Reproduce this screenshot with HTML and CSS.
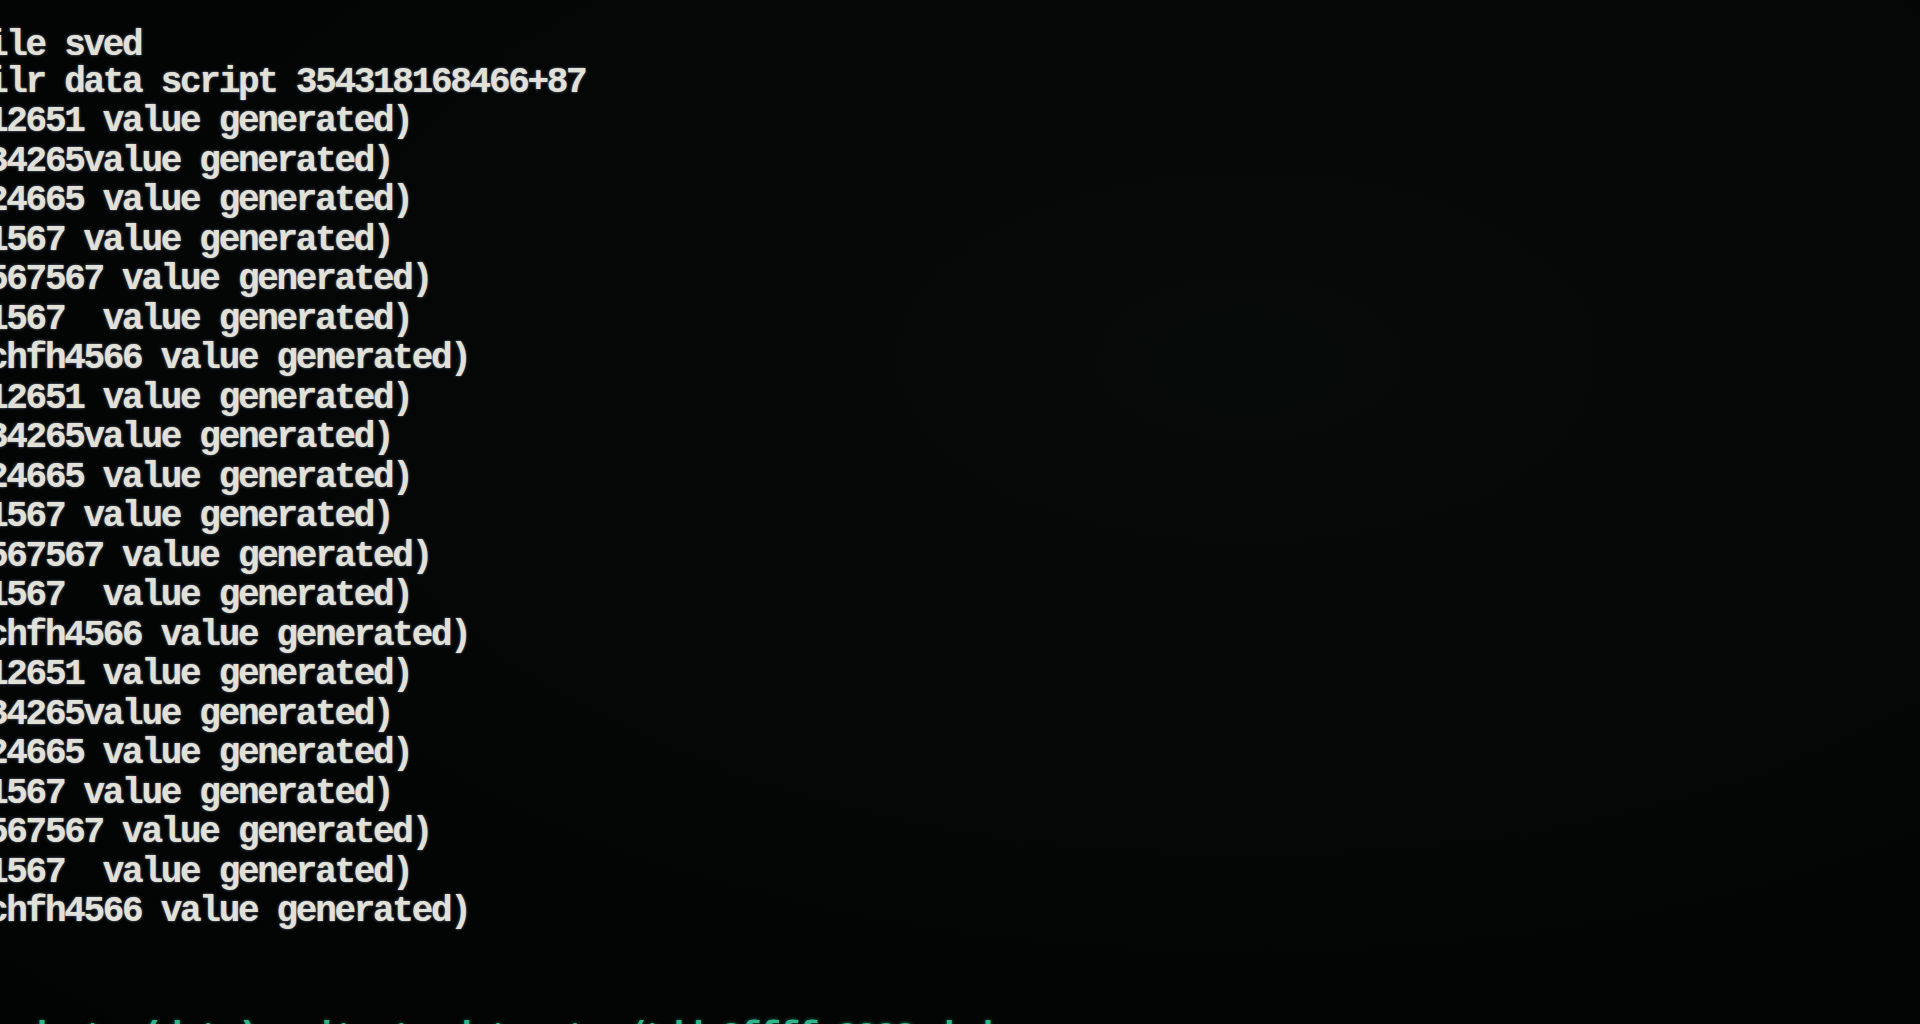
FILE: index.html
```html
<!DOCTYPE html>
<html lang="en">
<head>
<meta charset="utf-8">
<title>Terminal</title>
<link rel="stylesheet" href="styles.css">
</head>
<body>
<div class="screen">
  <div class="terminal">
    <div class="line first">ile sved</div>
    <div class="line">ilr data script 354318168466+87</div>
    <div class="line">12651 value generated)</div>
    <div class="line">34265value generated)</div>
    <div class="line">24665 value generated)</div>
    <div class="line">1567 value generated)</div>
    <div class="line">567567 value generated)</div>
    <div class="line">1567  value generated)</div>
    <div class="line">chfh4566 value generated)</div>
    <div class="line">12651 value generated)</div>
    <div class="line">34265value generated)</div>
    <div class="line">24665 value generated)</div>
    <div class="line">1567 value generated)</div>
    <div class="line">567567 value generated)</div>
    <div class="line">1567  value generated)</div>
    <div class="line">chfh4566 value generated)</div>
    <div class="line">12651 value generated)</div>
    <div class="line">34265value generated)</div>
    <div class="line">24665 value generated)</div>
    <div class="line">1567 value generated)</div>
    <div class="line">567567 value generated)</div>
    <div class="line">1567  value generated)</div>
    <div class="line">chfh4566 value generated)</div>
    <div class="line"> </div>
    <div class="line"> </div>
    <div class="line prompt">  d  t  (data) write to dataset  /tdd 3ffff 3333 d d</div>
  </div>
</div>
</body>
</html>
```
FILE: styles.css
```css
html, body {
  margin: 0;
  padding: 0;
  width: 1920px;
  height: 1024px;
  overflow: hidden;
  background: #030505;
}

.screen {
  width: 1920px;
  height: 1024px;
  overflow: hidden;
  background: radial-gradient(ellipse at 65% 35%, #060a09 0%, #040706 45%, #020303 100%);
}

.terminal {
  margin-left: -13px;
  padding-top: 23px;
  font-family: "Liberation Mono", "Courier New", monospace;
  font-weight: bold;
  font-size: 36px;
  letter-spacing: -2.3px;
  line-height: 39.5px;
  color: #e2e1d8;
  text-shadow: 0 0 3px rgba(190, 205, 255, 0.5), 0 0 1px rgba(255, 255, 255, 0.4);
}

.line {
  white-space: pre;
  height: 39.5px;
}

.first {
  padding-top: 3px;
  height: 36.5px;
}

.prompt {
  margin-top: 7px;
  color: #2fb58c;
  text-shadow: 0 0 4px rgba(40, 200, 150, 0.5);
}
```
